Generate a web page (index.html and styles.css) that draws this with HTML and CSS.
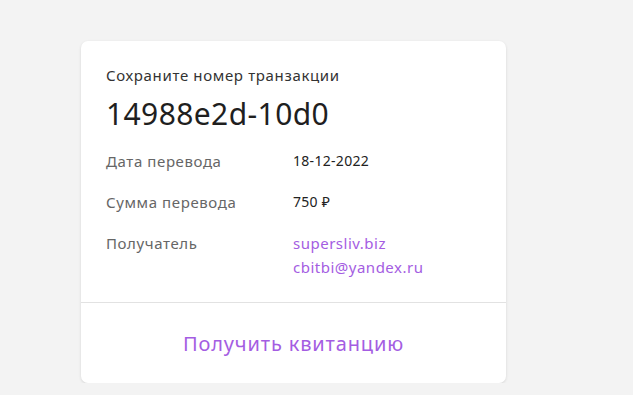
FILE: index.html
```html
<!DOCTYPE html>
<html lang="ru">
<head>
<meta charset="utf-8">
<link rel="stylesheet" href="styles.css">
</head>
<body>
<main class="page">
  <section class="card">
    <div class="card-body">
      <p class="hint">Сохраните номер транзакции</p>
      <h1 class="txid">14988e2d-10d0</h1>
      <dl class="details">
        <div class="row">
          <dt class="label">Дата перевода</dt>
          <dd class="value">18-12-2022</dd>
        </div>
        <div class="row">
          <dt class="label">Сумма перевода</dt>
          <dd class="value">750 ₽</dd>
        </div>
        <div class="row">
          <dt class="label">Получатель</dt>
          <dd class="value links">
            <a class="link" href="#">supersliv.biz</a>
            <a class="link" href="#">cbitbi@yandex.ru</a>
          </dd>
        </div>
      </dl>
    </div>
    <div class="card-footer">
      <a class="receipt" href="#">Получить квитанцию</a>
    </div>
  </section>
</main>
</body>
</html>
```
FILE: styles.css
```css
* { box-sizing: border-box; }
html, body {
  margin: 0;
  padding: 0;
  background: #f3f3f3;
  font-family: "Noto Sans", "Open Sans", sans-serif;
  color: #222;
}
.page {
  padding: 41px 0 0 81px;
}
.card {
  width: 425px;
  height: 342px;
  background: #fff;
  border-radius: 7px;
  box-shadow: 0 1px 3px rgba(0,0,0,0.12);
  display: flex;
  flex-direction: column;
}
.card-body {
  padding: 24px 25px 0 25px;
  height: 262px;
  border-bottom: 1px solid #e2e2e2;
}
.hint {
  margin: 0;
  font-size: 15px;
  line-height: 20px;
  color: #333;
  letter-spacing: 0.65px;
}
.txid {
  margin: 11px 0 0 0;
  font-size: 30px;
  line-height: 36px;
  font-weight: 400;
  color: #1f1f1f;
  letter-spacing: 0.4px;
}
.details {
  margin: 19px 0 0 0;
  display: flex;
  flex-direction: column;
  gap: 21px;
}
.row {
  display: grid;
  grid-template-columns: 187px 1fr;
}
.label, .value {
  margin: 0;
  font-size: 14px;
  line-height: 20px;
  letter-spacing: 0.3px;
}
.label { color: #666; font-size: 15px; letter-spacing: 0.6px; }
.value { color: #222; }
.links { display: flex; flex-direction: column; gap: 4px; }
.link {
  color: #a45de2;
  text-decoration: none;
  font-size: 15px;
  letter-spacing: 0.5px;
}
.card-footer {
  flex: 1;
  display: flex;
  align-items: center;
  justify-content: center;
}
.receipt {
  color: #a45de2;
  text-decoration: none;
  font-size: 20px;
  letter-spacing: 0.85px;
}
```
